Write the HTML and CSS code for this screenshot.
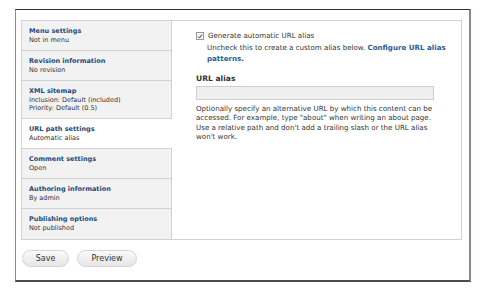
FILE: index.html
```html
<!DOCTYPE html>
<html>
<head>
<meta charset="utf-8">
<link rel="stylesheet" href="styles.css">
</head>
<body>
<div class="frame">
  <div class="vtabs">
    <ul class="tablist">
      <li class="tab"><div class="t">Menu settings</div><div class="s">Not in menu</div></li>
      <li class="tab"><div class="t">Revision information</div><div class="s">No revision</div></li>
      <li class="tab tall"><div class="t">XML sitemap</div><div class="s">Inclusion: Default (included)</div><div class="s s2">Priority: Default (0.5)</div></li>
      <li class="tab sel"><div class="t">URL path settings</div><div class="s">Automatic alias</div></li>
      <li class="tab"><div class="t">Comment settings</div><div class="s">Open</div></li>
      <li class="tab"><div class="t">Authoring information</div><div class="s">By admin</div></li>
      <li class="tab last"><div class="t">Publishing options</div><div class="s">Not published</div></li>
    </ul>
    <div class="panel">
      <div class="check-row">
        <span class="cb"><svg width="7" height="7" viewBox="0 0 7 7"><path d="M1.3 3.6 L2.8 5.3 L5.8 1.2" fill="none" stroke="#333" stroke-width="1.1"/></svg></span>
        <span class="cl">Generate automatic URL alias</span>
      </div>
      <div class="cdesc">Uncheck this to create a custom alias below. <a class="lnk">Configure URL alias</a> <a class="lnk">patterns.</a></div>
      <div class="label">URL alias</div>
      <div class="input"></div>
      <div class="desc">Optionally specify an alternative URL by which this content can be accessed. For example, type "about" when writing an about page. Use a relative path and don't add a trailing slash or the URL alias won't work.</div>
    </div>
  </div>
  <div class="actions">
    <button class="btn save">Save</button>
    <button class="btn preview">Preview</button>
  </div>
</div>
</body>
</html>
```
FILE: styles.css
```css
html, body { margin: 0; padding: 0; background: #fff; }
body { font-family: "DejaVu Sans", sans-serif; color: #333; }
.frame {
  margin: 9px 0 0 15px;
  width: 448px;
  height: 260px;
  border-top: 1px solid #333;
  border-left: 1px solid #8c8c8c;
  border-right: 2px solid #8a8494;
  border-bottom: 2px solid #4a4a55;
  padding: 10px 0 0 5px;
}
.vtabs {
  display: flex;
  width: 439px;
  height: 218px;
  border: 1px solid #d2d2d2;
}
.tablist {
  list-style: none;
  margin: 0;
  padding: 0;
  width: 149px;
  background: #f2f2f2;
  border-right: 1px solid #d2d2d2;
}
.tab {
  padding: 5px 7px;
  height: 19px;
  border-bottom: 1px solid #d2d2d2;
}
.tab.tall { height: 27px; }
.tab.last { border-bottom: none; }
.tab.sel { background: #fff; margin-right: -1px; position: relative; }
.t { font-size: 6.5px; font-weight: bold; color: #1f4a7c; line-height: 10px; }
.s { font-size: 6.5px; line-height: 9px; color: #333; }
.s2 { line-height: 7px; }
.panel { flex: 1; background: #fff; padding: 11px 0 0 24px; }
.check-row { display: flex; align-items: center; height: 8px; }
.cb {
  width: 6px; height: 6px;
  border: 1px solid #999;
  background: #f6f6f6;
  display: flex; align-items: center; justify-content: center;
  margin-right: 4px;
}
.cb svg { display: block; }
.cl { font-size: 7.1px; color: #333; line-height: 8px; }
.cdesc { font-size: 7.1px; line-height: 10.5px; margin: 3px 0 0 11px; width: 250px; }
.lnk { color: #1f5e96; font-weight: bold; }
.label { font-size: 7.6px; font-weight: bold; margin-top: 10px; line-height: 10px; }
.input {
  margin-top: 2px;
  width: 236px; height: 12px;
  border: 1px solid #cfcfcf;
  background: #efefef;
}
.desc { font-size: 7.1px; line-height: 9.4px; width: 242px; margin-top: 4px; }
.actions { display: flex; gap: 8px; margin: 10px 0 0 1px; }
.btn {
  font-family: "DejaVu Sans", sans-serif;
  font-size: 8px;
  color: #333;
  height: 17px;
  border: 1px solid #d4d4d4;
  border-radius: 9px;
  background: linear-gradient(#fafafa, #e6e6e6);
  padding: 0;
}
.save { width: 47px; }
.preview { width: 60px; }
```
